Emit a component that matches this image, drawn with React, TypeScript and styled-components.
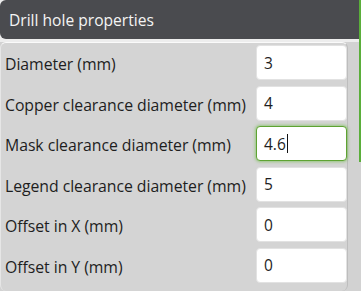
import React from "react";
import styled, { createGlobalStyle, css } from "styled-components";

const GlobalStyle = createGlobalStyle`
  html, body {
    margin: 0;
    padding: 0;
    background: #ededed;
  }
  body {
    font-family: "Open Sans", "Noto Sans", Arial, sans-serif;
  }
`;

interface Property {
  label: string;
  value: string;
  focused?: boolean;
}

const properties: Property[] = [
  { label: "Diameter (mm)", value: "3" },
  { label: "Copper clearance diameter (mm)", value: "4" },
  { label: "Mask clearance diameter (mm)", value: "4.6", focused: true },
  { label: "Legend clearance diameter (mm)", value: "5" },
  { label: "Offset in X (mm)", value: "0" },
  { label: "Offset in Y (mm)", value: "0" },
];

const Frame = styled.div`
  display: flex;
  width: 361px;
  height: 291px;
  overflow: hidden;
`;

const Panel = styled.div`
  display: flex;
  flex-direction: column;
  width: 359px;
  row-gap: 3px;
`;

const Header = styled.div`
  display: flex;
  align-items: center;
  height: 39px;
  padding-left: 9px;
  background-color: #4a4b4f;
  border-radius: 6px 0 0 6px;
  color: #f4f4f4;
  font-size: 15.6px;
`;

const Body = styled.div`
  display: flex;
  flex: 1;
  background-color: #d2d2d2;
`;

const Form = styled.div`
  display: flex;
  flex-direction: column;
  row-gap: 5.6px;
  width: 348px;
  padding: 2px 0 0 4px;
  box-sizing: border-box;
  background-color: #d4d4d4;
  border-top: 1px solid #fafafa;
  border-left: 1px solid #e6e6e6;
  border-right: 1px solid #bdbdbd;
  border-radius: 6px;
`;

const Row = styled.div`
  display: grid;
  grid-template-columns: 1fr 91px;
  align-items: center;
  height: 35px;
`;

const Label = styled.span`
  padding-top: 3px;
  color: #1e1e1e;
  font-size: 15.8px;
  letter-spacing: -0.05px;
  white-space: nowrap;
`;

const Field = styled.div<{ focused?: boolean }>`
  display: flex;
  align-items: center;
  height: 35px;
  padding-left: 7px;
  box-sizing: border-box;
  background-color: #ffffff;
  border: 1px solid #e2e2e2;
  border-radius: 4px;
  color: #1e1e1e;
  font-size: 15.5px;

  ${({ focused }) =>
    focused &&
    css`
      border-color: #5ea332;
      box-shadow: 0 0 3px 1px rgba(110, 190, 70, 0.6);
    `}
`;

const Caret = styled.span`
  display: inline-block;
  width: 1px;
  height: 19px;
  margin-left: 1px;
  background-color: #111;
`;

const Track = styled.div`
  display: flex;
  flex-direction: column;
  width: 2px;
  background-color: #d2d2d2;
`;

const Thumb = styled.div`
  height: 162px;
  background-color: #5aae3a;
`;

export default function App() {
  return (
    <>
      <GlobalStyle />
      <Frame>
        <Panel>
          <Header>Drill hole properties</Header>
          <Body>
            <Form>
              {properties.map((p) => (
                <Row key={p.label}>
                  <Label>{p.label}</Label>
                  <Field focused={p.focused}>
                    {p.value}
                    {p.focused && <Caret />}
                  </Field>
                </Row>
              ))}
            </Form>
          </Body>
        </Panel>
        <Track>
          <Thumb />
        </Track>
      </Frame>
    </>
  );
}
